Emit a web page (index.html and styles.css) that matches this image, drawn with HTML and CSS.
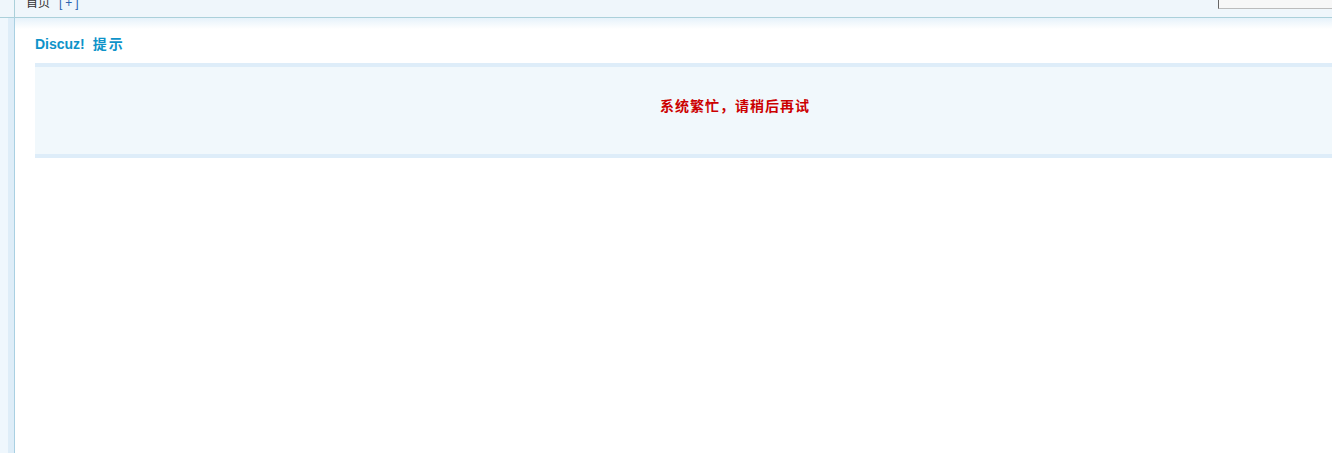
FILE: index.html
```html
<!DOCTYPE html>
<html lang="zh-CN">
<head>
<meta charset="utf-8">
<title>Discuz! 提示</title>
<link rel="stylesheet" href="styles.css">
</head>
<body>
<div class="page">
  <div class="topbar">
    <div class="top-side"></div>
    <div class="nav">
      <span class="nav-link">首页</span>
      <span class="nav-add">[+]</span>
    </div>
    <div class="search"></div>
  </div>
  <div class="mainrow">
    <div class="sidebar"></div>
    <div class="content">
      <h3 class="title">Discuz! <span class="cjk">提示</span></h3>
      <div class="infobox">
        <h4 class="infotitle">系统繁忙，请稍后再试</h4>
      </div>
    </div>
  </div>
</div>
</body>
</html>
```

FILE: styles.css
```css
html, body {
  margin: 0;
  padding: 0;
  overflow: hidden;
  background: #fff;
}
body {
  font: 12px/1.5 "Liberation Sans", "Noto Sans CJK SC", sans-serif;
  color: #333;
}
.page {
  width: 1455px;
  height: 453px;
  display: flex;
  flex-direction: column;
}
.topbar {
  height: 17px;
  flex: none;
  display: flex;
  background: #eff6fb;
  border-bottom: 1px solid #abd0da;
  overflow: hidden;
}
.top-side {
  width: 14px;
  flex: none;
  border-right: 1px solid #abd0da;
}
.nav {
  display: flex;
  gap: 9px;
  margin-left: 11px;
  margin-top: -6px;
  line-height: 18px;
  font-size: 12px;
}
.nav-link { color: #333; }
.nav-add {
  color: #2a64b0;
  letter-spacing: 3px;
}
.search {
  margin-left: auto;
  margin-right: 60px;
  width: 177px;
  height: 9px;
  background: #f7f7f7;
  border-left: 1px solid #666;
  border-bottom: 1px solid #bcbcbc;
  box-sizing: border-box;
}
.mainrow {
  flex: 1;
  display: flex;
}
.sidebar {
  width: 14px;
  flex: none;
  background: linear-gradient(to right, #eff7fd 0, #eff7fd 8px, #deedf8 8px, #deedf8 14px);
  border-right: 1px solid #a9d0e2;
}
.content {
  flex: 1;
  padding: 16px 20px 0 20px;
  background: linear-gradient(to bottom, #e6f2fa 0, #ffffff 11px);
}
.title {
  margin: 0 0 8px;
  font-size: 14px;
  line-height: 21px;
  font-weight: bold;
  color: #0e93c9;
  word-spacing: 4px;
}
.cjk {
  letter-spacing: 2px;
}
.infobox {
  border-top: 4px solid #deedf9;
  border-bottom: 4px solid #deedf9;
  background: #f1f8fc;
  padding: 29px 0 37px;
  text-align: center;
}
.infotitle {
  margin: 0;
  font-size: 14px;
  line-height: 21px;
  font-weight: bold;
  color: #cc0000;
  letter-spacing: 1px;
}
```
